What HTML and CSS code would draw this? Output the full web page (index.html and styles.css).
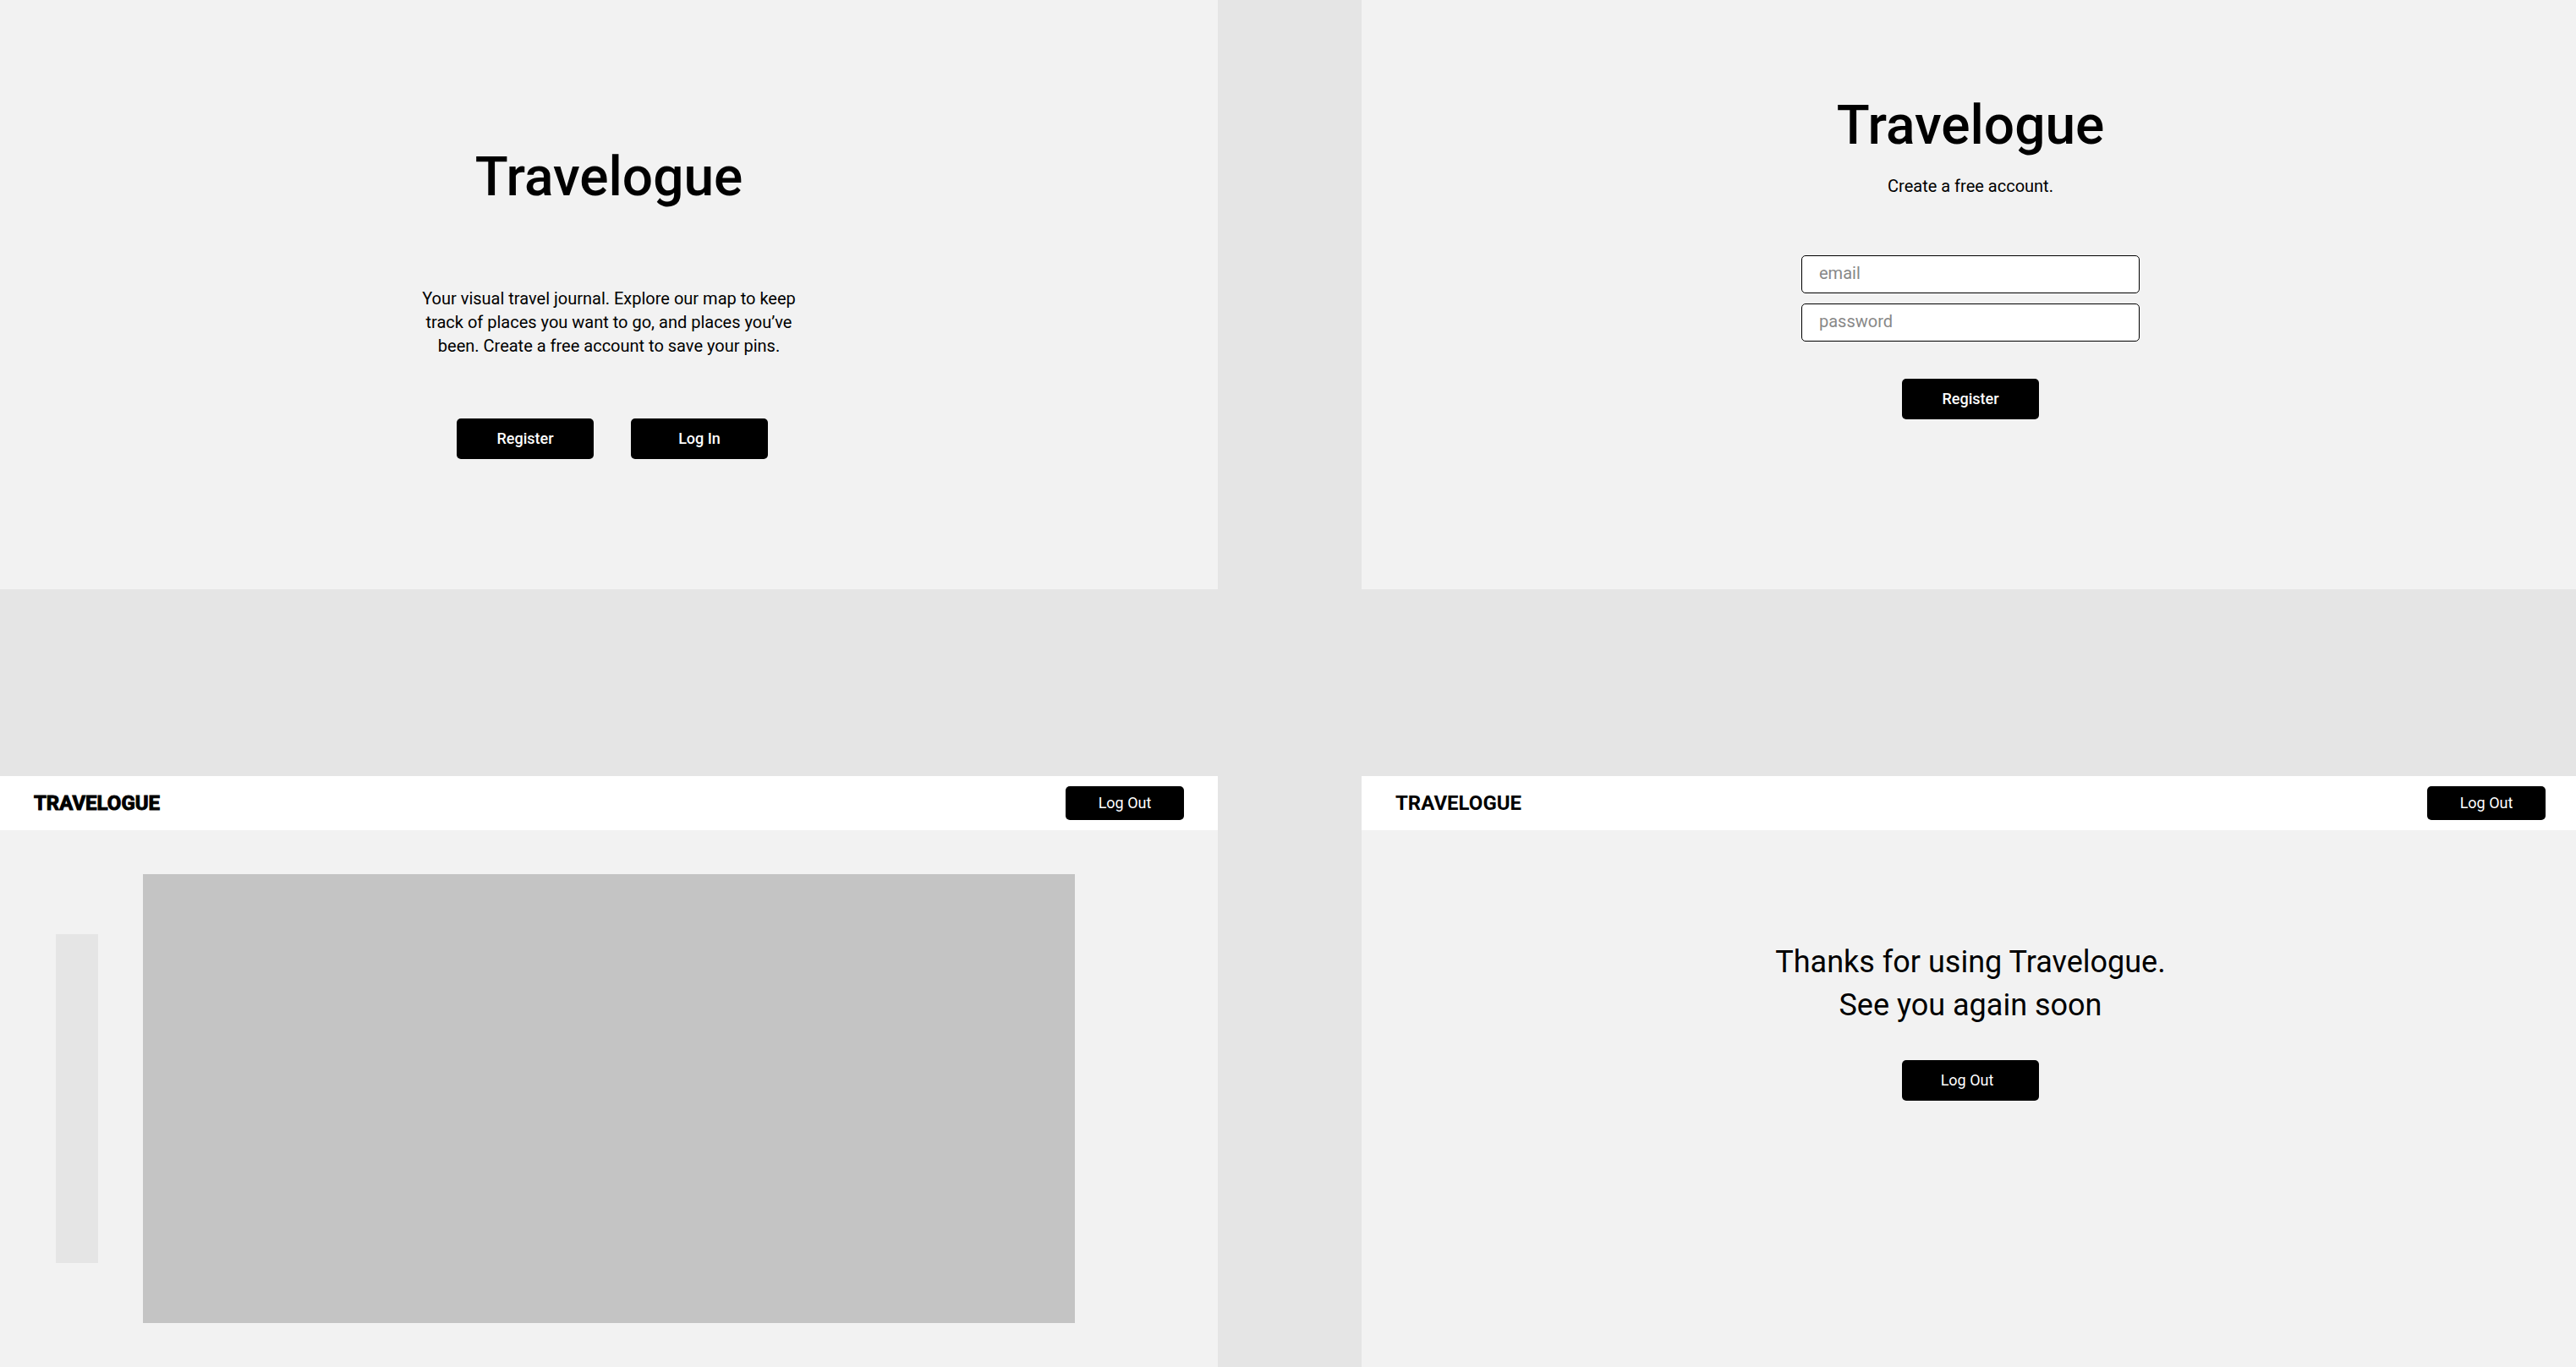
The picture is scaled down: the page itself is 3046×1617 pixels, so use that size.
FILE: index.html
```html
<!DOCTYPE html>
<html lang="en">
<head>
<meta charset="utf-8">
<meta name="viewport" content="width=device-width, initial-scale=1">
<title>Travelogue</title>
<link rel="stylesheet" href="styles.css">
</head>
<body>
<main class="board">
  <section class="screen welcome">
    <h1 class="title">Travelogue</h1>
    <p class="text intro">Your visual travel journal. Explore our map to keep track of places you want to go, and places you’ve been. Create a free account to save your pins.</p>
    <div class="actions">
      <button class="button" type="button">Register</button>
      <button class="button" type="button">Log In</button>
    </div>
  </section>

  <section class="screen register">
    <h1 class="title">Travelogue</h1>
    <p class="text tagline">Create a free account.</p>
    <form class="form">
      <input class="field" type="email" placeholder="email" aria-label="email">
      <input class="field" type="password" placeholder="password" aria-label="password">
      <button class="button submit" type="button">Register</button>
    </form>
  </section>

  <section class="screen">
    <header class="topbar">
      <a class="brand brand-heavy" href="#">TRAVELOGUE</a>
      <button class="button button-light button-small" type="button">Log Out</button>
    </header>
    <div class="workspace">
      <aside class="tools"></aside>
      <div class="map"></div>
    </div>
  </section>

  <section class="screen">
    <header class="topbar">
      <a class="brand" href="#">TRAVELOGUE</a>
      <button class="button button-light button-small" type="button">Log Out</button>
    </header>
    <div class="goodbye">
      <p class="message">Thanks for using Travelogue.<br>See you again soon</p>
      <button class="button button-light button-goodbye" type="button">Log Out</button>
    </div>
  </section>
</main>
</body>
</html>
```
FILE: styles.css
```css
* {
  box-sizing: border-box;
}

body {
  margin: 0;
  overflow-x: hidden;
  background: #e5e5e5;
  color: #000;
  font-family: Roboto, "Liberation Sans", sans-serif;
}

h1,
p {
  margin: 0;
}

/* The right-hand column runs slightly past the window edge. */
.board {
  display: grid;
  grid-template-columns: 1fr 1fr;
  grid-template-rows: auto 1fr;
  gap: 221px 170px;
  min-height: 100vh;
  margin-right: -4px;
}

.screen {
  display: flex;
  flex-direction: column;
  background: #f2f2f2;
}

.welcome,
.register {
  align-items: center;
  text-align: center;
}

.welcome {
  padding: 172px 40px 154px;
}

.register {
  padding: 111px 40px;
}

.title {
  font-size: 64px;
  font-weight: 500;
  line-height: 76px;
}

.text {
  font-size: 20px;
  line-height: 28px;
}

.intro {
  max-width: 460px;
  margin-top: 91px;
}

.tagline {
  margin-top: 19px;
}

.actions {
  display: flex;
  gap: 44px;
  margin-top: 72px;
  padding-left: 8px;
}

.button {
  width: 162px;
  height: 48px;
  padding: 0;
  border: 0;
  border-radius: 5px;
  background: #000;
  color: #fff;
  font: 500 18px/24px Roboto, "Liberation Sans", sans-serif;
  cursor: pointer;
}

.button-light {
  font-weight: 400;
}

.button-small {
  width: 140px;
  height: 40px;
}

.form {
  display: flex;
  flex-direction: column;
  align-items: center;
  gap: 12px;
  margin-top: 68px;
}

.field {
  width: 400px;
  height: 45px;
  padding: 0 20px 3px;
  border: 1px solid #000;
  border-radius: 5px;
  background: #fff;
  color: #000;
  font: 400 20px/28px Roboto, "Liberation Sans", sans-serif;
}

.field::placeholder {
  color: #888;
  opacity: 1;
}

.submit {
  margin-top: 32px;
}

.topbar {
  display: flex;
  align-items: center;
  justify-content: space-between;
  padding: 12px 40px;
  background: #fff;
}

.brand {
  color: #000;
  font-size: 24px;
  font-weight: 700;
  line-height: 28px;
  text-decoration: none;
}

.brand-heavy {
  -webkit-text-stroke: 1px #000;
}

.workspace {
  display: flex;
  flex: 1;
  align-items: center;
  gap: 53px;
  padding: 52px 169px 52px 66px;
}

.tools {
  width: 50px;
  height: 389px;
  background: #e5e5e5;
}

.map {
  flex: 1;
  align-self: stretch;
  background: #c4c4c4;
}

.goodbye {
  display: flex;
  flex-direction: column;
  align-items: center;
  gap: 39px;
  padding: 131px 40px;
}

.message {
  font-size: 36px;
  line-height: 51px;
  text-align: center;
}

.button-goodbye {
  padding-right: 8px;
}
```
